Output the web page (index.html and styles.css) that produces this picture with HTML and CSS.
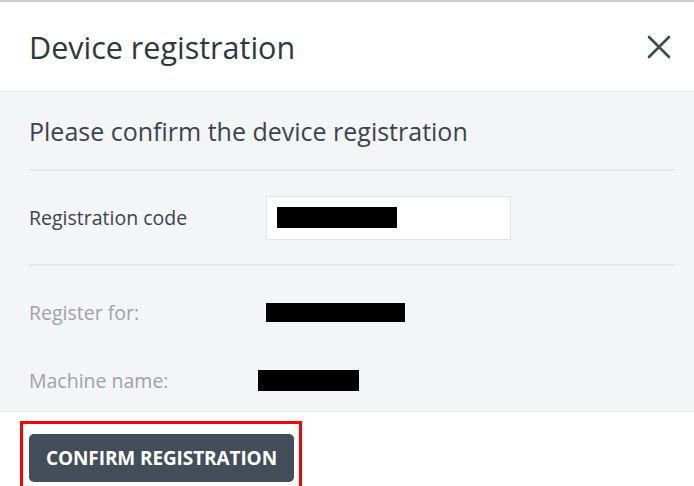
FILE: index.html
```html
<!DOCTYPE html>
<html>
<head>
<meta charset="utf-8">
<link rel="stylesheet" href="styles.css">
</head>
<body>
<div class="dialog">
  <header class="head">
    <h1 class="title">Device registration</h1>
    <button class="close" aria-label="Close">
      <svg width="24" height="24" viewBox="0 0 24 24"><path d="M2 2 L22 22 M22 2 L2 22" stroke="#3d4a57" stroke-width="2.6" stroke-linecap="round" fill="none"/></svg>
    </button>
  </header>
  <main class="body">
    <h2 class="subtitle">Please confirm the device registration</h2>
    <div class="row edit">
      <span class="label">Registration code</span>
      <div class="input"><span class="redact r1"></span></div>
    </div>
    <div class="info-list">
      <div class="row info">
        <span class="label muted">Register for:</span>
        <span class="redact r2"></span>
      </div>
      <div class="row info">
        <span class="label muted">Machine name:</span>
        <span class="redact r3"></span>
      </div>
    </div>
  </main>
  <footer class="foot">
    <div class="highlight">
      <button class="confirm">CONFIRM REGISTRATION</button>
    </div>
  </footer>
</div>
</body>
</html>
```

FILE: styles.css
```css
* { box-sizing: border-box; }
html, body { margin: 0; padding: 0; }
body {
  font-family: "Open Sans", "Liberation Sans", sans-serif;
  background: #ffffff;
  color: #333c46;
  width: 694px;
  height: 486px;
  overflow: hidden;
}
.dialog {
  border-top: 2px solid #cfcfcf;
  display: flex;
  flex-direction: column;
}
.head {
  height: 90px;
  flex: none;
  display: flex;
  align-items: center;
  justify-content: space-between;
  padding: 0 23px 0 29px;
  border-bottom: 1px solid #e6e8eb;
  background: #fff;
}
.title {
  margin: 0;
  font-weight: 400;
  font-size: 30.5px;
  color: #2f3740;
}
.close {
  background: none;
  border: 0;
  padding: 0;
  width: 24px;
  height: 24px;
  display: flex;
}
.body {
  background: #f4f5f7;
  padding: 0 19px 0 29px;
  height: 320px;
  flex: none;
  overflow: hidden;
  border-bottom: 1px solid #e3e5e8;
}
.subtitle {
  margin: 0;
  height: 79px;
  display: flex;
  align-items: center;
  font-weight: 400;
  font-size: 25px;
  color: #3b444e;
  border-bottom: 2px solid #e6e8eb;
}
.row {
  display: flex;
  align-items: center;
}
.row.edit {
  height: 95px;
  border-bottom: 2px solid #e6e8eb;
}
.info-list { padding-top: 12px; }
.row.info { height: 68px; }
.label {
  font-size: 19.5px;
  width: 237px;
  flex: none;
  color: #3b444e;
}
.label.muted { color: #9ea3a9; }
.input {
  width: 245px;
  height: 44px;
  background: #fff;
  border: 1px solid #e2e4e7;
  display: flex;
  align-items: center;
  padding-left: 10px;
}
.redact { display: block; background: #000; }
.r1 { width: 120px; height: 21px; }
.r2 { width: 139px; height: 19px; }
.r3 { width: 101px; height: 21px; margin-left: -8px; }
.foot {
  background: #fff;
  padding: 9px 0 0 20px;
}
.highlight {
  width: 282px;
  height: 80px;
  border: 3px solid #ff0000;
  border-bottom: 0;
  padding: 10px 0 0 6px;
}
.confirm {
  width: 265px;
  height: 48px;
  background: #434e5a;
  color: #fff;
  border: 0;
  border-radius: 5px;
  font-family: "Open Sans", "Liberation Sans", sans-serif;
  font-weight: 700;
  font-size: 19px;
  letter-spacing: -0.1px;
  padding: 0;
}
```
